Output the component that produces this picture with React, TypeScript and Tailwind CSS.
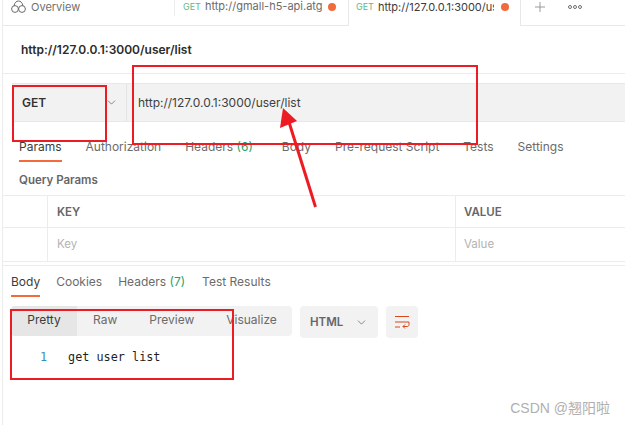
import { ChevronDown, Plus } from "lucide-react";

const font = "font-['Inter','Liberation_Sans',sans-serif]";

function TabLink({ label, count, active, className }: { label: string; count?: string; active?: boolean; className?: string }) {
  return (
    <div className={`relative flex h-full items-center whitespace-nowrap text-[12px] leading-none ${className ?? ""}`}>
      <span className={active ? "text-[#3c3c3c]" : "text-[#6b6b6b]"}>
        {label}
        {count && <span className="text-[#26a269]"> ({count})</span>}
      </span>
      {active && <div className="absolute bottom-0 left-0 right-0 h-[2px] bg-[#f26b3a]" />}
    </div>
  );
}

function Annotations() {
  return (
    <>
      <div className="absolute left-[12px] top-[85px] h-[57px] w-[95px] border-2 border-[#ed1c24]" />
      <div className="absolute left-[132px] top-[65px] h-[80px] w-[346px] border-2 border-[#ed1c24]" />
      <div className="absolute left-[10px] top-[309px] h-[71px] w-[224px] border-2 border-[#ed1c24]" />
      <svg className="absolute left-0 top-0" width="625" height="425" fill="none">
        <path d="M315.5 207 L289 122" stroke="#ed1c24" strokeWidth="3" />
        <path d="M283 108 L297 121 L280 128 Z" fill="#ed1c24" />
      </svg>
    </>
  );
}

export default function App() {
  return (
    <div className={`relative h-[425px] w-[625px] overflow-hidden bg-white ${font}`}>
      <div className="ml-[2px] flex h-full flex-col border-l border-[#ececec]">
        {/* top tabs */}
        <div className="flex h-[26px] shrink-0 items-stretch border-b border-[#e8e8e8] text-[11px]">
          <div className="flex w-[172px] items-start">
            <div className="flex h-[14px] flex-1 items-center gap-[5px] pl-[8px] text-[#707070]">
              <svg width="15" height="14" viewBox="0 0 15 14" fill="none" stroke="#6b6b6b" strokeWidth="1">
                <circle cx="4" cy="9" r="3.4" />
                <circle cx="11" cy="9" r="3.4" />
                <path d="M3 6C3.5 2.5 5.5 1 7.5 1S11.5 2.5 12 6" />
              </svg>
              Overview
            </div>
            <div className="h-[16px] w-px bg-[#ececec]" />
          </div>
          <div className="flex w-[173px] items-center pb-[12px] pl-[8px] text-[#6b6b6b]">
            <span className="mr-[4px] text-[9px] text-[#5fb98a]">GET</span>
            <span className="w-[118px] overflow-hidden whitespace-nowrap">http://gmall-h5-api.atg</span>
            <span className="ml-[5px] size-[8px] rounded-full bg-[#f26b3a]" />
          </div>
          <div className="-mb-px flex w-[173px] items-center border-x border-[#e8e8e8] bg-white pb-[12px] pl-[7px] text-[#3c3c3c]">
            <span className="mr-[4px] text-[9px] text-[#5fb98a]">GET</span>
            <span className="w-[116px] overflow-hidden whitespace-nowrap">http://127.0.0.1:3000/user/list</span>
            <span className="ml-[7px] size-[8px] rounded-full bg-[#f26b3a]" />
          </div>
          <div className="flex items-center pb-[12px] pl-[11px]">
            <Plus size={16} strokeWidth={1.5} className="text-[#9a9a9a]" />
            <div className="ml-[20px] flex gap-px">
              <span className="size-[4px] rounded-full border border-[#707070]" />
              <span className="size-[4px] rounded-full border border-[#707070]" />
              <span className="size-[4px] rounded-full border border-[#707070]" />
            </div>
          </div>
        </div>

        {/* request title */}
        <div className="flex h-[48px] shrink-0 items-center border-b border-[#ececec] pl-[18px] text-[12px] font-semibold text-[#2b2b2b]">
          http://127.0.0.1:3000/user/list
        </div>

        {/* url bar */}
        <div className="ml-[9px] mt-[9px] flex h-[39px] shrink-0 items-center border-y border-[#e8e8e8] bg-[#f2f2f2]">
          <div className="flex h-full w-[115px] items-center justify-between border-r border-[#e4e4e4] pl-[10px] pr-[8px]">
            <span className="pt-[1px] text-[12px] font-semibold text-[#333]">GET</span>
            <ChevronDown size={13} strokeWidth={1.25} className="text-[#555]" />
          </div>
          <span className="pl-[11px] text-[12px] text-[#3f3f3f]">http://127.0.0.1:3000/user/list</span>
        </div>

        {/* request tabs */}
        <div className="ml-[16px] mt-[9px] flex h-[31px] shrink-0 gap-[24px]">
          <TabLink label="Params" active />
          <TabLink label="Authorization" />
          <TabLink label="Headers" count="6" className="mr-[5px]" />
          <TabLink label="Body" />
          <TabLink label="Pre-request Script" />
          <TabLink label="Tests" />
          <TabLink label="Settings" />
        </div>

        <div className="flex h-[33px] shrink-0 items-center pl-[16px] pt-[5px] text-[11.5px] font-semibold text-[#666]">Query Params</div>

        {/* params table */}
        <div className="shrink-0 border-b border-[#ececec] text-[11.5px]">
          <div className="grid h-[33px] grid-cols-[45px_408px_1fr] border-y border-[#ececec] font-semibold text-[#666]">
            <div className="border-r border-[#ececec]" />
            <div className="flex items-center border-r border-[#ececec] pl-[9px] pt-[2px]">KEY</div>
            <div className="flex items-center pl-[8px] pt-[2px]">VALUE</div>
          </div>
          <div className="grid h-[33px] grid-cols-[45px_408px_1fr] text-[#b3b3b3]">
            <div className="border-r border-[#ececec]" />
            <div className="flex items-center border-r border-[#ececec] pl-[9px]">Key</div>
            <div className="flex items-center pl-[8px]">Value</div>
          </div>
        </div>

        {/* response */}
        <div className="mt-[3px] border-t border-[#ececec]" />
        <div className="ml-[8px] flex h-[31px] shrink-0 gap-[16px]">
          <TabLink label="Body" active />
          <TabLink label="Cookies" />
          <TabLink label="Headers" count="7" />
          <TabLink label="Test Results" className="ml-px" />
        </div>

        <div className="ml-[8px] mt-[9px] flex shrink-0 items-start gap-[8px]">
          <div className="flex h-[30px] w-[281px] items-center overflow-hidden rounded-[4px] bg-[#f2f2f2] pb-[2px] text-[12px] text-[#6b6b6b]">
            <div className="-mb-[2px] flex h-[30px] w-[66px] items-center justify-center bg-[#e6e6e6] pb-[2px] text-[#3c3c3c]">Pretty</div>
            <span className="ml-[16px]">Raw</span>
            <span className="ml-[32px]">Preview</span>
            <span className="ml-[32px]">Visualize</span>
          </div>
          <div className="flex h-[32px] w-[78px] items-center rounded-[4px] bg-[#f2f2f2] pl-[10px] text-[11.5px] font-semibold text-[#666]">
            <span className="pt-[2px]">HTML</span>
            <ChevronDown size={13} strokeWidth={1.25} className="ml-[12px] text-[#555]" />
          </div>
          <div className="flex size-[32px] items-center justify-center rounded-[4px] bg-[#f2f2f2]">
            <svg width="16" height="14" viewBox="0 0 16 14" fill="none" stroke="#d9481c" strokeWidth="1">
              <path d="M1 1.5H15" />
              <path d="M1 7H15V9.5C15 11 14 11.5 13 11.5H9" />
              <path d="M11 9.5L9 11.5L11 13.5" />
              <path d="M1 12H6" />
            </svg>
          </div>
        </div>

        <div className="ml-[37px] mt-[13px] flex h-[14px] shrink-0 items-center font-['DejaVu_Sans_Mono','Liberation_Mono',monospace] text-[11.8px]">
          <span className="text-[#3a8fb7]">1</span>
          <span className="ml-[21px] text-[#1f1f1f]">get user list</span>
        </div>
      </div>

      <Annotations />

      <div className="absolute right-[15px] top-[400px] font-['Liberation_Sans','Noto_Sans_CJK_SC',sans-serif] text-[14px] leading-[16px] text-[#b0b0b0]">
        CSDN @翘阳啦
      </div>
    </div>
  );
}
